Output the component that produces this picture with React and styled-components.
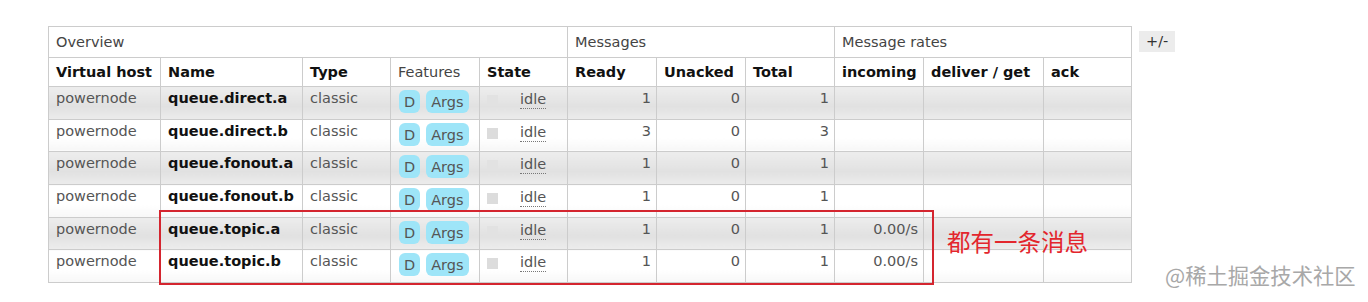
import styled, {createGlobalStyle} from 'styled-components';

const GlobalStyle = createGlobalStyle`
  body {
    margin: 0;
    background: #fff;
    font-family: "DejaVu Sans", Verdana, sans-serif;
  }
`

const Page = styled.div`
  position: relative;
  width: 1368px;
  height: 302px;
  padding: 26px 0 0 48px;
  box-sizing: border-box;
  display: flex;
  align-items: flex-start;
  gap: 7px;
`

const Table = styled.table`
  border-collapse: collapse;
  table-layout: fixed;
  width: 1083px;
  font-size: 14.5px;
  color: #555;
`

const GroupHead = styled.th`
  border: 1px solid #ccc;
  height: 30px;
  padding: 0 7px;
  text-align: left;
  font-weight: normal;
  color: #444;
  background: #fff;
`

const ColHead = styled.th`
  border: 1px solid #ccc;
  height: 28px;
  padding: 0 7px;
  text-align: left;
  white-space: nowrap;
  font-weight: ${p => (p.$plain ? 'normal' : 'bold')};
  color: ${p => (p.$plain ? '#444' : '#111')};
  background: #fff;
`

const Row = styled.tr`
  height: 32.7px;

  td {
    background: ${p =>
      p.$alt
        ? 'linear-gradient(to bottom, #ededed 0%, #e1e1e1 60%, #ececec 100%)'
        : 'linear-gradient(to bottom, #fff 0%, #fff 60%, #f7f7f7 100%)'};
  }
`

const Cell = styled.td`
  border: 1px solid #ccc;
  padding: ${p => (p.$num ? '3px 5px 0 7px' : '3px 7px 0 7px')};
  vertical-align: top;
  white-space: nowrap;
  text-align: ${p => (p.$num ? 'right' : 'left')};
  font-weight: ${p => (p.$bold ? 'bold' : 'normal')};
  color: ${p => (p.$bold ? '#111' : '#555')};
`

const Badges = styled.div`
  display: flex;
  gap: 6px;
  padding: 0 0 0 1px;
`

const Badge = styled.span`
  display: inline-block;
  background: #9ee5f8;
  color: #555;
  border-radius: 6px;
  padding: 2px 5px 1px;
  line-height: 20px;
`

const StateBox = styled.div`
  display: flex;
  align-items: flex-start;
  gap: 22px;
`

const Check = styled.span`
  width: 11px;
  height: 11px;
  margin-top: 5px;
  background: ${p => (p.$alt ? '#e2e2e2' : '#dcdcdc')};
`

const Idle = styled.span`
  border-bottom: 1px dotted #777;
  line-height: 18px;
`

const Toggle = styled.div`
  margin-top: 5px;
  background: #ececec;
  color: #333;
  font-size: 14.5px;
  padding: 1px 7px 2px;
  line-height: 18px;
`

const Highlight = styled.div`
  position: absolute;
  left: 159px;
  top: 210px;
  width: 775px;
  height: 75px;
  border: 2px solid #d4252f;
  box-sizing: border-box;
  pointer-events: none;
`

const Note = styled.div`
  position: absolute;
  left: 947px;
  top: 226px;
  color: #e3262d;
  font-family: "Noto Sans CJK SC", sans-serif;
  font-size: 23.5px;
  line-height: 30px;
`

const Watermark = styled.div`
  position: absolute;
  left: 1165px;
  top: 261px;
  color: #a8a8a8;
  font-family: "Noto Sans CJK SC", sans-serif;
  font-size: 21.3px;
  line-height: 28px;
`

const widths = [112, 142, 88, 89, 88, 89, 89, 89, 89, 120, 88]

const queues = [
  {name: 'queue.direct.a', ready: 1, total: 1},
  {name: 'queue.direct.b', ready: 3, total: 3},
  {name: 'queue.fonout.a', ready: 1, total: 1},
  {name: 'queue.fonout.b', ready: 1, total: 1},
  {name: 'queue.topic.a', ready: 1, total: 1, rate: '0.00/s'},
  {name: 'queue.topic.b', ready: 1, total: 1, rate: '0.00/s'},
]

const App = () => {
  return (
    <>
      <GlobalStyle />
      <Page>
        <Table>
          <colgroup>
            {widths.map((w, i) => <col key={i} style={{width: w}} />)}
          </colgroup>
          <thead>
            <tr>
              <GroupHead colSpan={5}>Overview</GroupHead>
              <GroupHead colSpan={3}>Messages</GroupHead>
              <GroupHead colSpan={3}>Message rates</GroupHead>
            </tr>
            <tr>
              <ColHead>Virtual host</ColHead>
              <ColHead>Name</ColHead>
              <ColHead>Type</ColHead>
              <ColHead $plain>Features</ColHead>
              <ColHead>State</ColHead>
              <ColHead>Ready</ColHead>
              <ColHead>Unacked</ColHead>
              <ColHead>Total</ColHead>
              <ColHead>incoming</ColHead>
              <ColHead>deliver / get</ColHead>
              <ColHead>ack</ColHead>
            </tr>
          </thead>
          <tbody>
            {queues.map((q, i) => {
              const alt = i % 2 === 0
              return (
                <Row key={q.name} $alt={alt}>
                  <Cell>powernode</Cell>
                  <Cell $bold>{q.name}</Cell>
                  <Cell>classic</Cell>
                  <Cell>
                    <Badges>
                      <Badge>D</Badge>
                      <Badge>Args</Badge>
                    </Badges>
                  </Cell>
                  <Cell>
                    <StateBox>
                      <Check $alt={alt} />
                      <Idle>idle</Idle>
                    </StateBox>
                  </Cell>
                  <Cell $num>{q.ready}</Cell>
                  <Cell $num>0</Cell>
                  <Cell $num>{q.total}</Cell>
                  <Cell $num>{q.rate}</Cell>
                  <Cell />
                  <Cell />
                </Row>
              )
            })}
          </tbody>
        </Table>
        <Toggle>+/-</Toggle>
        <Highlight />
        <Note>都有一条消息</Note>
        <Watermark>@稀土掘金技术社区</Watermark>
      </Page>
    </>
  )
}

export default App;
